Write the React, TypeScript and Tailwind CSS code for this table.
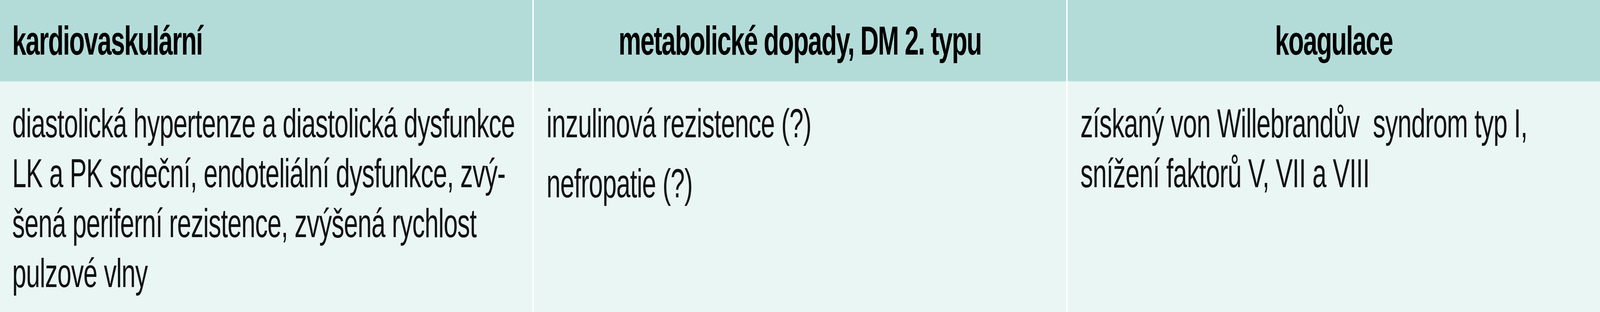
import React, { useLayoutEffect, useState } from "react";

const font = { fontFamily: '"Liberation Sans", Arial, sans-serif' };

const DESIGN_WIDTH = 6552;

export default function App() {
  const [sx, setSx] = useState(1);

  useLayoutEffect(() => {
    const fit = () => setSx(Math.min(1, window.innerWidth / DESIGN_WIDTH));
    fit();
    window.addEventListener("resize", fit);
    return () => window.removeEventListener("resize", fit);
  }, []);

  return (
    <div className="w-full h-[800px] overflow-hidden bg-white">
      <div
        className="w-[6552px] h-[800px] bg-white grid grid-cols-3 gap-x-[6px] grid-rows-[210px_590px] origin-top-left"
        style={{ ...font, transform: `scaleX(${sx})` }}
      >
        <div className="bg-[#b3dcd9] border-b-2 border-[#d9eeec] flex items-center pl-[50px] text-[104px] leading-[128px] font-bold tracking-[-3px] text-black whitespace-pre">
          kardiovaskulární
        </div>
        <div className="bg-[#b3dcd9] border-b-2 border-[#d9eeec] flex items-center justify-center text-[104px] leading-[128px] font-bold tracking-[-3px] text-black whitespace-pre">
          metabolické dopady, DM 2. typu
        </div>
        <div className="bg-[#b3dcd9] border-b-2 border-[#d9eeec] flex items-center justify-center text-[104px] leading-[128px] font-bold tracking-[-3px] text-black whitespace-pre">
          koagulace
        </div>

        <div className="bg-[#eaf6f4] pt-[42px] pl-[50px] text-[104px] leading-[128px] tracking-[-1.5px] text-[#111] whitespace-pre">
          <p>
            diastolická hypertenze a diastolická dysfunkce
            <br />
            LK a PK srdeční, endoteliální dysfunkce, zvý-
            <br />
            šená periferní rezistence, zvýšená rychlost
            <br />
            pulzové vlny
          </p>
        </div>
        <div className="bg-[#eaf6f4] pt-[42px] pl-[52px] text-[104px] leading-[128px] tracking-[-1.5px] text-[#111] whitespace-pre flex flex-col gap-[26px]">
          <p>inzulinová rezistence (?)</p>
          <p>nefropatie (?)</p>
        </div>
        <div className="bg-[#eaf6f4] pt-[42px] pl-[52px] text-[104px] leading-[128px] tracking-[-1.5px] text-[#111] whitespace-pre">
          <p>
            získaný von Willebrandův  syndrom typ I,
            <br />
            snížení faktorů V, VII a VIII
          </p>
        </div>
      </div>
    </div>
  );
}
